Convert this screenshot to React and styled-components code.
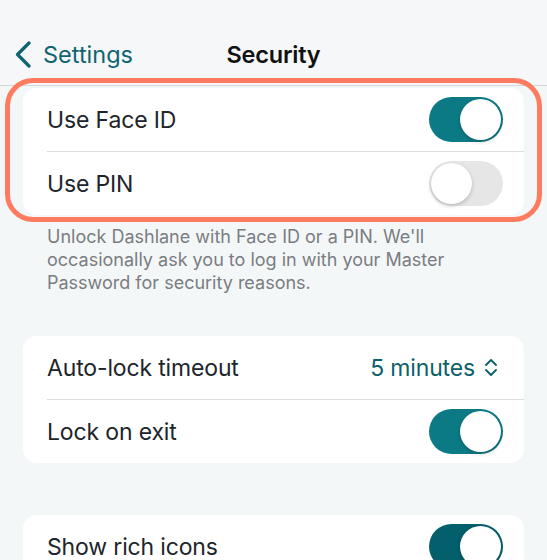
import React from "react";
import styled, { createGlobalStyle } from "styled-components";

const GlobalStyle = createGlobalStyle`
  body {
    margin: 0;
    background: #f4f7f8;
    font-family: Inter, "Noto Sans", sans-serif;
    -webkit-font-smoothing: antialiased;
  }
`;

const Screen = styled.div`
  width: 547px;
  height: 560px;
  overflow: hidden;
  background: #f4f7f8;
`;

const NavBar = styled.div`
  display: grid;
  grid-template-columns: 1fr auto 1fr;
  align-items: center;
  height: 44px;
  padding: 32px 0 9px;
  border-bottom: 1px solid #d3d6d8;
  background: #f5f7f8;
`;

const BackButton = styled.div`
  display: flex;
  align-items: center;
  gap: 11px;
  padding-left: 14px;
  color: #0f6470;
  font-size: 23.5px;
`;

const Title = styled.div`
  font-size: 23.5px;
  font-weight: 600;
  color: #111;
  letter-spacing: -0.2px;
`;

const Highlight = styled.div`
  position: relative;
  margin: -8px 5px 0;
  padding: 5px 13px 2px;
  border: 5px solid #ff7b5f;
  border-radius: 28px;
`;

const Card = styled.div`
  margin: ${(p) => p.$margin || "0"};
  background: #fff;
  border-radius: 14px;
  overflow: hidden;
`;

const Row = styled.div`
  position: relative;
  display: flex;
  align-items: center;
  justify-content: space-between;
  height: 63px;
  padding: 0 ${(p) => (p.$value ? "26px" : "21px")} 0 24px;
  border-top: ${(p) => (p.$divider ? "1px" : "0")} solid transparent;

  &::before {
    content: "";
    display: ${(p) => (p.$divider ? "block" : "none")};
    position: absolute;
    left: 24px;
    right: 0;
    top: -1px;
    height: 1px;
    background: #dcdddf;
  }
`;

const Label = styled.span`
  font-size: 23px;
  color: #20252a;
  letter-spacing: -0.15px;
`;

const Value = styled.span`
  display: flex;
  align-items: center;
  gap: 9px;
  font-size: 23px;
  letter-spacing: -0.15px;
  color: #0d5f6b;
`;

const Track = styled.div`
  position: relative;
  width: 74px;
  height: 45px;
  border-radius: 23px;
  background: ${(p) => (p.$on ? p.$color || "#0c7a84" : "#e6e6e6")};
  flex-shrink: 0;
`;

const Knob = styled.div`
  position: absolute;
  top: 2px;
  left: ${(p) => (p.$on ? "31px" : "2px")};
  width: 41px;
  height: 41px;
  border-radius: 50%;
  background: #fff;
  box-shadow: 0 2px 4px rgba(0, 0, 0, 0.18), 0 0 1px rgba(0, 0, 0, 0.1);
`;

const Footer = styled.p`
  margin: 3px 0 0;
  padding: 0 30px 0 47px;
  font-size: 18px;
  line-height: 23px;
  color: #7a7d81;
  white-space: pre-line;
`;

const Toggle = ({ on, color }) => (
  <Track $on={on} $color={color}>
    <Knob $on={on} />
  </Track>
);

const BackChevron = () => (
  <svg width="18" height="27" viewBox="0 0 18 27">
    <path
      d="M15 2 L3.5 13.5 L15 25"
      fill="none"
      stroke="#0f6470"
      strokeWidth="3.2"
      strokeLinecap="round"
      strokeLinejoin="round"
    />
  </svg>
);

const UpDown = () => (
  <svg width="14" height="19" viewBox="0 0 14 19">
    <path
      d="M2 7 L7 2 L12 7 M2 12 L7 17 L12 12"
      fill="none"
      stroke="#0d5f6b"
      strokeWidth="1.9"
      strokeLinecap="round"
      strokeLinejoin="round"
    />
  </svg>
);

export default function App() {
  return (
    <Screen>
      <GlobalStyle />
      <NavBar>
        <BackButton>
          <BackChevron />
          Settings
        </BackButton>
        <Title>Security</Title>
        <div />
      </NavBar>

      <Highlight>
        <Card>
          <Row>
            <Label>Use Face ID</Label>
            <Toggle on />
          </Row>
          <Row $divider>
            <Label>Use PIN</Label>
            <Toggle on={false} />
          </Row>
        </Card>
      </Highlight>

      <Footer>
        {"Unlock Dashlane with Face ID or a PIN. We'll\noccasionally ask you to log in with your Master\nPassword for security reasons."}
      </Footer>

      <Card $margin="42px 23px 0">
        <Row $value>
          <Label>Auto-lock timeout</Label>
          <Value>
            5 minutes
            <UpDown />
          </Value>
        </Row>
        <Row $divider>
          <Label>Lock on exit</Label>
          <Toggle on />
        </Row>
      </Card>

      <Card $margin="52px 23px 0">
        <Row>
          <Label>Show rich icons</Label>
          <Toggle on color="#035f6b" />
        </Row>
      </Card>
    </Screen>
  );
}
